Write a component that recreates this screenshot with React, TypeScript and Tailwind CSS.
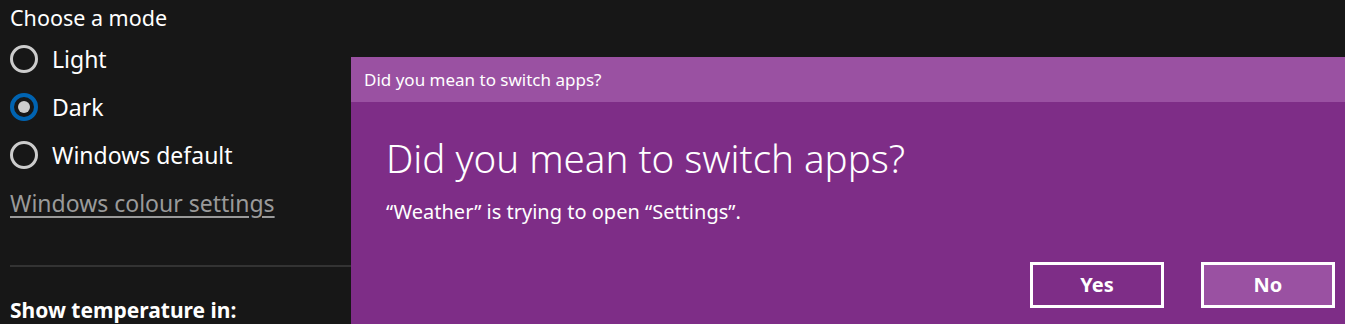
import React from 'react';

const font = { fontFamily: '"Noto Sans", "Open Sans", sans-serif' };

const Radio: React.FC<{ label: string; checked?: boolean }> = ({ label, checked }) => (
  <label className="flex items-center gap-[14px] h-[48px]">
    {checked ? (
      <span className="w-[28px] h-[28px] rounded-full border-[4px] border-[#0063b1] flex items-center justify-center">
        <span className="w-[12px] h-[12px] rounded-full bg-[#cccccc]" />
      </span>
    ) : (
      <span className="w-[28px] h-[28px] rounded-full border-[3px] border-[#cccccc]" />
    )}
    <span className="text-[23px] text-white">{label}</span>
  </label>
);

const App: React.FC = () => {
  return (
    <div className="relative w-[1345px] h-[324px] bg-[#171717] overflow-hidden" style={font}>
      {/* settings page behind the dialog */}
      <div className="pl-[10px] pt-[3px]">
        <div className="text-[21.5px] text-white leading-[30px]">Choose a mode</div>
        <div className="flex flex-col mt-[2px]">
          <Radio label="Light" />
          <Radio label="Dark" checked />
          <Radio label="Windows default" />
        </div>
        <a className="block mt-[8px] text-[23px] text-[#9a9a9a] underline underline-offset-4 leading-[32px]">
          Windows colour settings
        </a>
        <div className="mt-[46px] h-[2px] bg-[#333333] w-[400px]" />
        <div className="mt-[28px] text-[21px] font-bold text-white">Show temperature in:</div>
      </div>

      {/* switch apps dialog */}
      <div className="absolute left-[351px] top-[57px] right-0 bottom-0 bg-[#7e2d87] flex flex-col">
        <div className="h-[45px] bg-[#9a51a2] flex items-center pl-[13px] text-[17px] text-white">
          Did you mean to switch apps?
        </div>
        <div className="pl-[35px] pt-[31px]">
          <div className="text-[38.5px] text-white font-light leading-[50px]">Did you mean to switch apps?</div>
          <div className="mt-[14px] text-[20px] text-white">“Weather” is trying to open “Settings”.</div>
        </div>
        <div className="flex justify-end gap-[37px] pr-[10px] mt-auto mb-[16px]">
          <button className="w-[134px] h-[46px] border-[3px] border-white text-white font-bold text-[20px]">Yes</button>
          <button className="w-[134px] h-[46px] border-[3px] border-white bg-[#9a51a2] text-white font-bold text-[20px]">No</button>
        </div>
      </div>
    </div>
  );
};

export default App;
